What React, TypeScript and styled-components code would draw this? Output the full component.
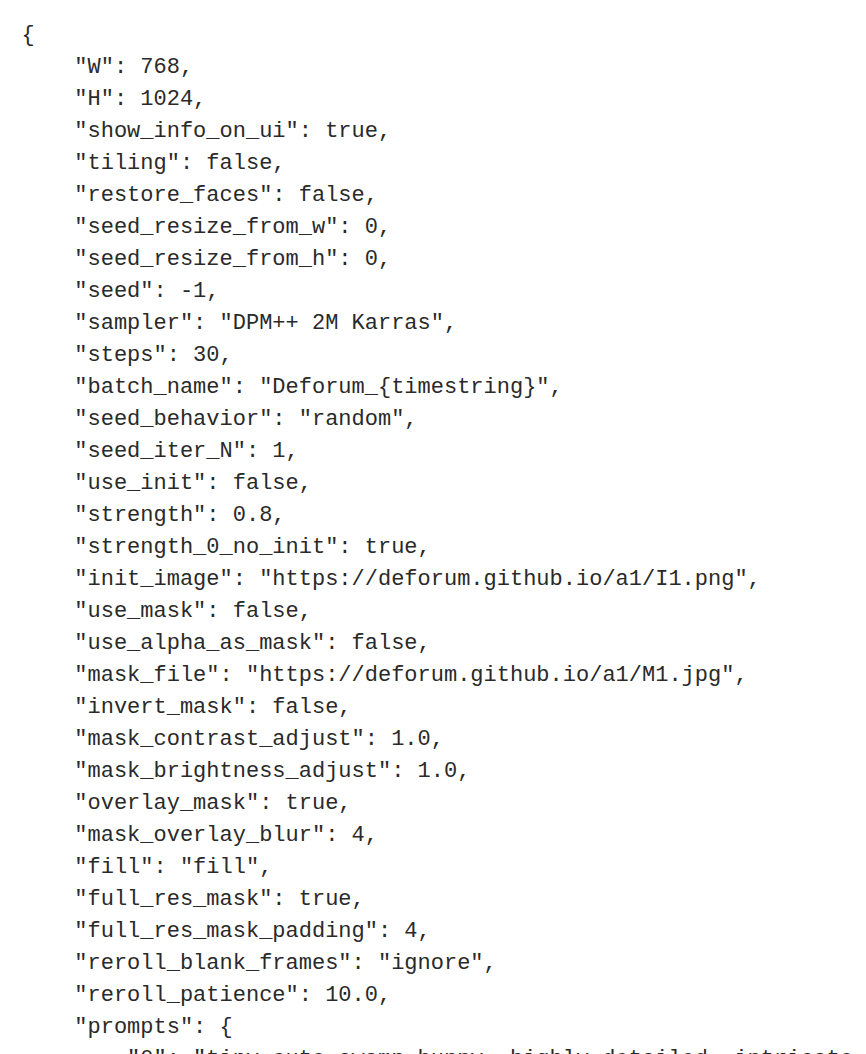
import React from "react";
import styled, { createGlobalStyle } from "styled-components";

const Global = createGlobalStyle`
  html, body { margin: 0; padding: 0; background: #ffffff; }
  body { overflow: hidden; }
`;

const Page = styled.main`
  width: 866px;
  height: 1054px;
  overflow: hidden;
  background: #ffffff;
  padding: 20px 0 0 21.5px;
  box-sizing: border-box;
`;

const Code = styled.div`
  display: flex;
  flex-direction: column;
  font-family: "Courier New", "Nimbus Mono PS", "Nimbus Mono L", "FreeMono", Courier, "Liberation Mono", monospace;
  font-size: 22px;
  line-height: 32px;
  color: #2a2a2a;
  white-space: pre;
`;

const Line = styled.div<{ $indent: number }>`
  padding-left: ${(p) => p.$indent * 4 * 13.2}px;
  height: 32px;
`;

const entries: [string, string][] = [
  ["W", "768"],
  ["H", "1024"],
  ["show_info_on_ui", "true"],
  ["tiling", "false"],
  ["restore_faces", "false"],
  ["seed_resize_from_w", "0"],
  ["seed_resize_from_h", "0"],
  ["seed", "-1"],
  ["sampler", '"DPM++ 2M Karras"'],
  ["steps", "30"],
  ["batch_name", '"Deforum_{timestring}"'],
  ["seed_behavior", '"random"'],
  ["seed_iter_N", "1"],
  ["use_init", "false"],
  ["strength", "0.8"],
  ["strength_0_no_init", "true"],
  ["init_image", '"https://deforum.github.io/a1/I1.png"'],
  ["use_mask", "false"],
  ["use_alpha_as_mask", "false"],
  ["mask_file", '"https://deforum.github.io/a1/M1.jpg"'],
  ["invert_mask", "false"],
  ["mask_contrast_adjust", "1.0"],
  ["mask_brightness_adjust", "1.0"],
  ["overlay_mask", "true"],
  ["mask_overlay_blur", "4"],
  ["fill", '"fill"'],
  ["full_res_mask", "true"],
  ["full_res_mask_padding", "4"],
  ["reroll_blank_frames", '"ignore"'],
  ["reroll_patience", "10.0"],
];

export default function App() {
  return (
    <>
      <Global />
      <Page>
        <Code>
          <Line $indent={0}>{"{"}</Line>
          {entries.map(([k, v]) => (
            <Line key={k} $indent={1}>{`"${k}": ${v},`}</Line>
          ))}
          <Line $indent={1}>{'"prompts": {'}</Line>
          <Line $indent={2}>{'"0": "tiny cute swamp bunny, highly detailed, intricate,'}</Line>
        </Code>
      </Page>
    </>
  );
}
